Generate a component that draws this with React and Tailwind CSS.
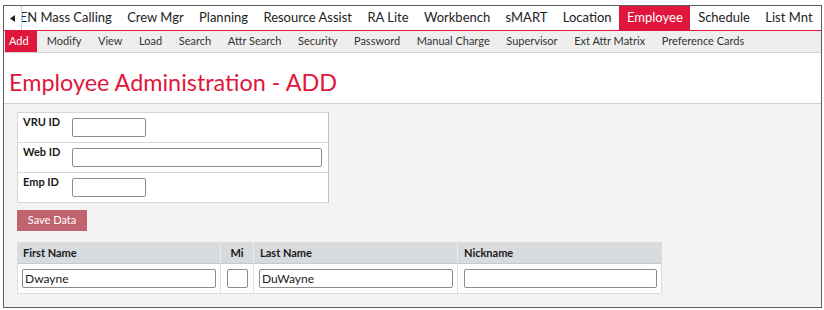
import React from "react";

const TOP = ["EN Mass Calling","Crew Mgr","Planning","Resource Assist","RA Lite","Workbench","sMART","Location","Employee","Schedule","List Mnt"];
const SUB = ["Modify","View","Load","Search","Attr Search","Security","Password","Manual Charge","Supervisor","Ext Attr Matrix","Preference Cards"];

const font = { fontFamily: "Lato, 'Noto Sans', sans-serif" };

function Field({ w, value }) {
  return (
    <input
      readOnly
      value={value || ""}
      className={`block h-[19px] ${w} border border-[#8c8c8c] rounded-[2px] bg-white pl-[2px] text-[12px] text-[#222] outline-none`}
      style={font}
    />
  );
}

export default function App() {
  return (
    <div className="w-[824px] h-[310px] bg-white pt-[5px] pl-[3px]" style={font}>
      <div className="w-[819px] h-[303px] border border-[#5c5c5c] flex flex-col overflow-hidden">
        {/* top nav */}
        <div className="flex h-[25px] border-b border-[#e0163c] shrink-0">
          <div className="w-[18px] shrink-0 flex items-center justify-center border-r border-[#cfcfcf]">
            <svg width="5" height="7" viewBox="0 0 5 7"><path d="M5 0 L0 3.5 L5 7 Z" fill="#222" /></svg>
          </div>
          <div className="flex-1 overflow-hidden">
            <div className="flex h-[24px] -ml-[10px] whitespace-nowrap">
              {TOP.map((t) => (
                <div
                  key={t}
                  className={`px-[7.7px] flex items-center text-[13px] ${t === "Employee" ? "bg-[#e0163c] text-white" : "text-[#222]"}`}
                >
                  {t}
                </div>
              ))}
            </div>
          </div>
        </div>
        {/* sub nav */}
        <div className="flex h-[22px] bg-[#eeeeee] border-b border-[#d2d2d2] pl-px shrink-0 whitespace-nowrap">
          <div className="w-[32px] flex items-center bg-[#e0163c] text-white pl-[4px] text-[11px]">Add</div>
          <div className="flex pl-[1.5px]">
            {SUB.map((t) => (
              <div key={t} className="flex items-center text-[11px] text-[#333] px-[8.3px]">
                {t}
              </div>
            ))}
          </div>
        </div>
        {/* heading */}
        <div className="h-[51px] border-b border-[#d0d0d0] pl-[5px] pt-[15px] shrink-0">
          <div className="text-[23.4px] leading-[28px] text-[#e0163c] whitespace-nowrap">Employee Administration - ADD</div>
        </div>
        {/* body */}
        <div className="flex-1 bg-[#f3f3f3] pl-[13px] pt-[8px]">
          <div className="w-[312px] bg-white border border-[#d6d6d6] border-r-[#c4c4c4]">
            {[
              ["VRU ID", "w-[74px]"],
              ["Web ID", "w-[250px]"],
              ["Emp ID", "w-[74px]"],
            ].map(([label, w], i) => (
              <div key={label} className={`flex ${i < 2 ? "h-[30px] border-b border-[#d6d6d6]" : "h-[29px]"}`}>
                <div className="w-[54px] pl-[5px] pt-[2px] text-[11px] leading-[13px] font-bold text-[#1a1a1a]">{label}</div>
                <div className="pt-[5px]"><Field w={w} /></div>
              </div>
            ))}
          </div>
          <div className="mt-[7px] w-[70px] h-[21px] bg-[#c1626f] text-white text-[11px] flex items-center justify-center">
            Save Data
          </div>
          <div className="mt-[11px] w-[645px] bg-white border border-[#dcdcdc]">
            <div className="flex h-[21px] bg-[#d8dbde] border-b border-[#c9c9c9] text-[11px] font-bold text-[#1a1a1a]">
              <div className="w-[203px] border-r border-[#eceef0] pl-[5px] flex items-center">First Name</div>
              <div className="w-[33px] border-r border-[#eceef0] flex items-center justify-center">Mi</div>
              <div className="w-[204px] border-r border-[#eceef0] pl-[6px] flex items-center">Last Name</div>
              <div className="w-[203px] pl-[6px] flex items-center">Nickname</div>
            </div>
            <div className="flex h-[29px]">
              <div className="w-[203px] border-r border-[#e2e2e2] pl-[4px] pr-[4px] pt-[5px]"><Field w="w-full" value="Dwayne" /></div>
              <div className="w-[33px] border-r border-[#e2e2e2] pl-[6px] pt-[5px]"><Field w="w-[21px]" /></div>
              <div className="w-[204px] border-r border-[#e2e2e2] pl-[5px] pr-[4px] pt-[5px]"><Field w="w-full" value="DuWayne" /></div>
              <div className="w-[203px] pl-[6px] pr-[4px] pt-[5px]"><Field w="w-full" /></div>
            </div>
          </div>
        </div>
      </div>
    </div>
  );
}
